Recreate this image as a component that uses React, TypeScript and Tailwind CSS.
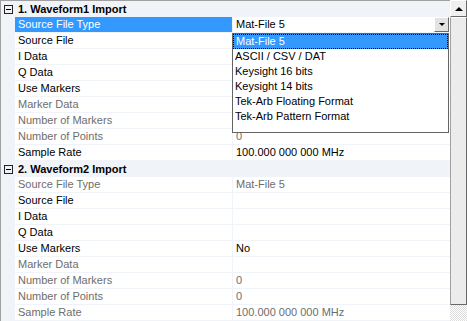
type Row = { name: string; value?: string; disabled?: boolean; selected?: boolean };

const SECTIONS: { title: string; rows: Row[] }[] = [
  {
    title: "1. Waveform1 Import",
    rows: [
      { name: "Source File Type", value: "Mat-File 5", selected: true },
      { name: "Source File" },
      { name: "I Data" },
      { name: "Q Data" },
      { name: "Use Markers" },
      { name: "Marker Data", disabled: true },
      { name: "Number of Markers", disabled: true },
      { name: "Number of Points", value: "0", disabled: true },
      { name: "Sample Rate", value: "100.000 000 000 MHz" },
    ],
  },
  {
    title: "2. Waveform2 Import",
    rows: [
      { name: "Source File Type", value: "Mat-File 5", disabled: true },
      { name: "Source File" },
      { name: "I Data" },
      { name: "Q Data" },
      { name: "Use Markers", value: "No" },
      { name: "Marker Data", disabled: true },
      { name: "Number of Markers", value: "0", disabled: true },
      { name: "Number of Points", value: "0", disabled: true },
      { name: "Sample Rate", value: "100.000 000 000 MHz", disabled: true },
    ],
  },
];

const OPTIONS = [
  "Mat-File 5",
  "ASCII / CSV / DAT",
  "Keysight 16 bits",
  "Keysight 14 bits",
  "Tek-Arb Floating Format",
  "Tek-Arb Pattern Format",
];

const CategoryRow = ({ title }: { title: string }) => (
  <div className="flex h-[16px] shrink-0 items-center bg-[#f0f4f9]">
    <div className="flex w-[14px] shrink-0 justify-center">
      <div className="relative h-[9px] w-[9px] border border-[#222]">
        <div className="absolute left-[1px] top-[3px] h-px w-[5px] bg-black" />
      </div>
    </div>
    <span className="pl-[3px] font-bold text-black">{title}</span>
  </div>
);

const PropRow = ({ row }: { row: Row }) => {
  const color = row.disabled ? "text-[#6d6d6d]" : "text-black";
  return (
    <div className="flex h-[16px] shrink-0 bg-[#f0f4f9]">
      <div className="w-[14px] shrink-0" />
      <div
        className={`flex w-[217px] shrink-0 items-center border-b border-[#f0f4f9] pl-[3px] ${
          row.selected ? "bg-[#3399ff] text-white" : `bg-white ${color}`
        }`}
      >
        {row.name}
      </div>
      <div className="w-px shrink-0" />
      <div className={`flex flex-1 items-center border-b border-[#f0f4f9] bg-white pl-[3px] ${color}`}>
        {row.value}
        {row.selected && (
          <div className="ml-auto mr-[1px] flex h-[15px] w-[15px] items-center justify-center border border-t-white border-l-white border-r-[#696969] border-b-[#696969] bg-[#e3e3e3]">
            <div className="h-0 w-0 border-x-[3px] border-t-[3px] border-x-transparent border-t-black" />
          </div>
        )}
      </div>
    </div>
  );
};

export default function App() {
  return (
    <div
      className="relative flex h-[321px] w-[467px] overflow-hidden bg-white text-[11px] leading-none"
      style={{ fontFamily: '"Liberation Sans", Arial, sans-serif' }}
    >
      <div className="flex w-[450px] flex-col border-l border-t border-[#a0a0a0]">
        {SECTIONS.map((s) => (
          <div key={s.title} className="flex flex-col">
            <CategoryRow title={s.title} />
            {s.rows.map((r) => (
              <PropRow key={s.title + r.name} row={r} />
            ))}
          </div>
        ))}
      </div>

      {/* scrollbar */}
      <div className="flex w-[17px] flex-col bg-[repeating-conic-gradient(#ffffff_0_25%,#dcdcdc_0_50%)] bg-[length:2px_2px]">
        <div className="flex h-[17px] shrink-0 items-center justify-center border border-t-white border-l-white border-r-[#696969] border-b-[#696969] bg-[#f0f0f0]">
          <div className="h-0 w-0 border-x-[4px] border-b-[4px] border-x-transparent border-b-black" />
        </div>
        <div className="h-[288px] shrink-0 border border-t-white border-l-[#a0a0a0] border-r-[#696969] border-b-[#696969] bg-[#ececec]" />
      </div>

      {/* open dropdown list */}
      <div className="absolute left-[232px] top-[33px] flex h-[100px] w-[217px] flex-col border border-[#646464] bg-white">
        {OPTIONS.map((o, i) => (
          <div
            key={o}
            className={`flex h-[15px] shrink-0 items-center pl-[2px] ${
              i === 0 ? "border border-dotted border-black bg-[#3399ff] text-white" : "text-black"
            }`}
          >
            {o}
          </div>
        ))}
      </div>
    </div>
  );
}
